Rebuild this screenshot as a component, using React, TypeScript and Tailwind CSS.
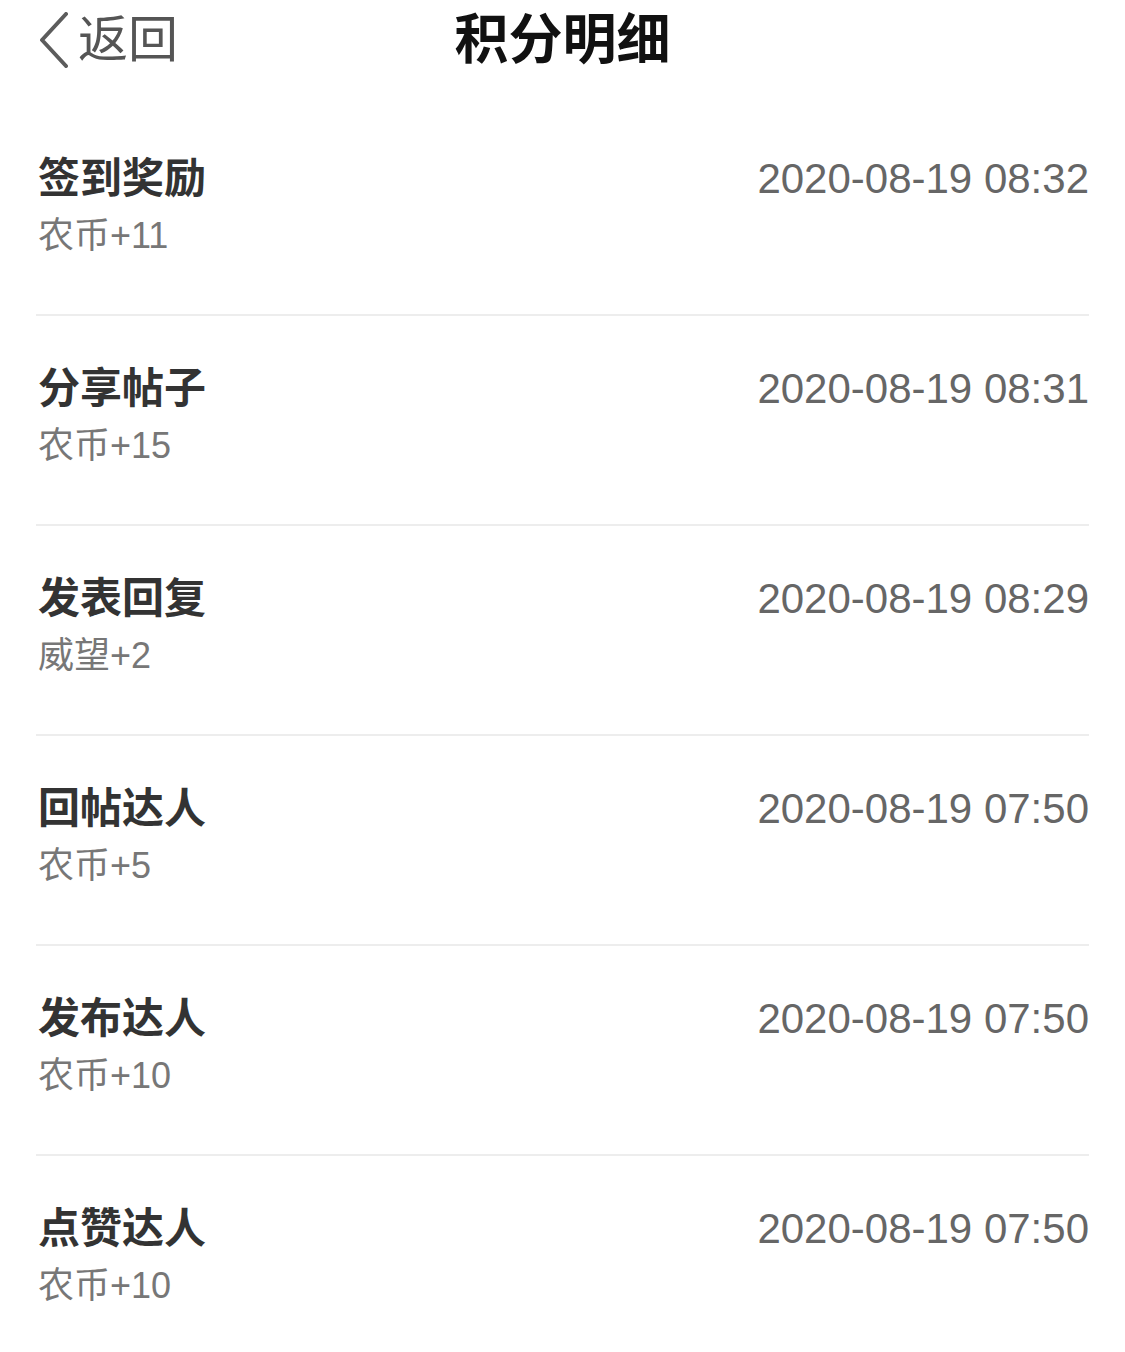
import React from "react";

const rows = [
  { title: "签到奖励", sub: "农币+11", time: "2020-08-19 08:32" },
  { title: "分享帖子", sub: "农币+15", time: "2020-08-19 08:31" },
  { title: "发表回复", sub: "威望+2", time: "2020-08-19 08:29" },
  { title: "回帖达人", sub: "农币+5", time: "2020-08-19 07:50" },
  { title: "发布达人", sub: "农币+10", time: "2020-08-19 07:50" },
  { title: "点赞达人", sub: "农币+10", time: "2020-08-19 07:50" },
];

const font = { fontFamily: '"Liberation Sans", "Noto Sans CJK SC", sans-serif' };

export default function App() {
  return (
    <div className="w-[1125px] h-[1352px] bg-white overflow-hidden" style={font}>
      <div className="relative h-[80px] flex items-center justify-center">
        <div className="absolute left-[36px] top-0 h-[80px] flex items-center">
          <svg width="34" height="56" viewBox="0 0 34 56" className="mr-[8px]">
            <path d="M30 2 L6 28 L30 54" fill="none" stroke="#5c5c5c" strokeWidth="4" strokeLinecap="round" strokeLinejoin="round" />
          </svg>
          <span className="text-[50px] leading-[56px] text-[#555555]">返回</span>
        </div>
        <span className="text-[54px] leading-[60px] font-bold text-[#111111]">积分明细</span>
      </div>
      <div className="mt-[26px] mx-[36px]">
        {rows.map((r, i) => (
          <div key={i} className="h-[210px] border-b-2 border-[#ededed] flex justify-between items-start pt-[48px] pl-[2px]">
            <div className="flex flex-col">
              <span className="text-[42px] leading-[50px] font-bold text-[#333333]">{r.title}</span>
              <span className="text-[36px] leading-[44px] text-[#777777] mt-[10px]">{r.sub}</span>
            </div>
            <span className="text-[42px] leading-[50px] text-[#666666]">{r.time}</span>
          </div>
        ))}
      </div>
    </div>
  );
}
